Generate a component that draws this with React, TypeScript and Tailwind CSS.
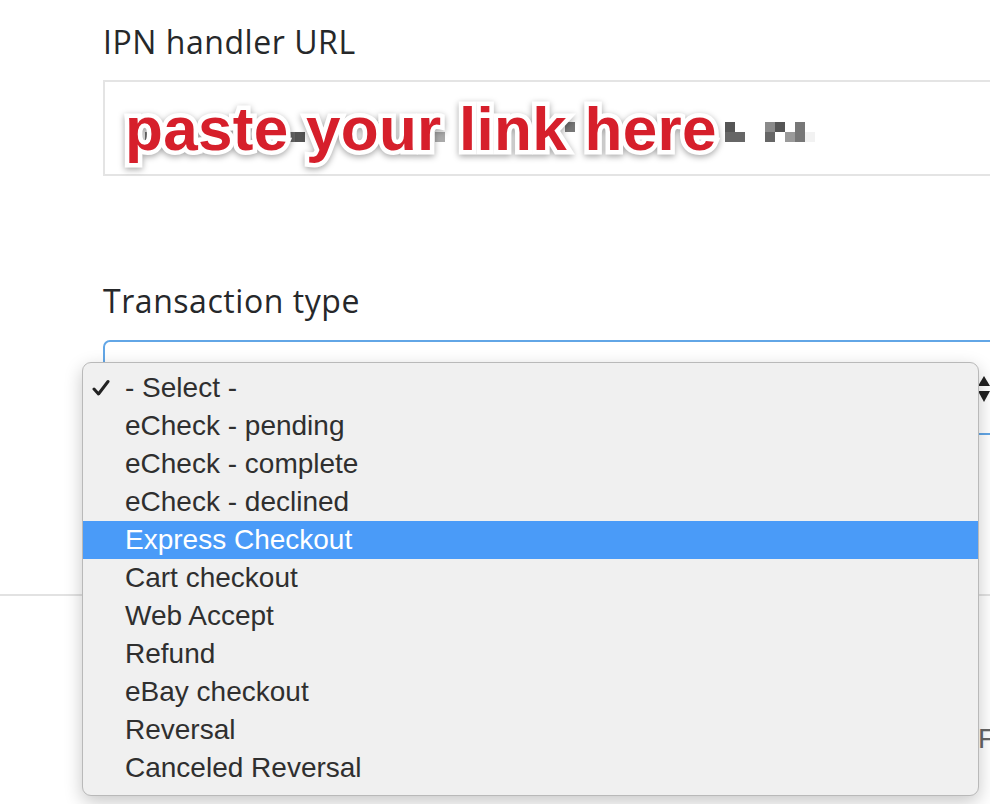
import React from 'react';

const options = [
  '- Select -',
  'eCheck - pending',
  'eCheck - complete',
  'eCheck - declined',
  'Express Checkout',
  'Cart checkout',
  'Web Accept',
  'Refund',
  'eBay checkout',
  'Reversal',
  'Canceled Reversal',
];

// pixelated leftovers of the blurred URL
const blocks = [
  { x: 0, y: 0, c: '#5a5a5a' }, { x: 20, y: 10, c: '#777' }, { x: 40, y: 0, c: '#999' },
  { x: 160, y: 10, c: '#666' }, { x: 170, y: 10, c: '#555' }, { x: 250, y: 0, c: '#888' },
  { x: 310, y: 10, c: '#aaa' }, { x: 440, y: 0, c: '#777' }, { x: 460, y: 10, c: '#999' },
  { x: 600, y: 0, c: '#555' }, { x: 600, y: 10, c: '#666' }, { x: 610, y: 10, c: '#666' },
  { x: 640, y: 10, c: '#666' }, { x: 640, y: 0, c: '#8a8a8a' }, { x: 650, y: 0, c: '#555' },
  { x: 660, y: 10, c: '#9a9a9a' }, { x: 670, y: 0, c: '#777' }, { x: 670, y: 10, c: '#777' },
  { x: 680, y: 10, c: '#f2f2f2' },
];

export default function App() {
  return (
    <div className="relative w-[990px] h-[804px] overflow-hidden bg-white font-['Open_Sans',sans-serif] text-[#26282a]">
      {/* Form */}
      <div className="pl-[103px] pt-[22px]">
        <div className="text-[32px] leading-[40px] tracking-[0.55px]">IPN handler URL</div>
        <div className="relative mt-[18px] h-[96px] w-[960px] border-2 border-[#e4e4e4] bg-white">
          <div className="absolute left-[20px] top-[40px]">
            {blocks.map((b, i) => (
              <div
                key={i}
                className="absolute w-[10px] h-[10px]"
                style={{ left: b.x, top: b.y, background: b.c }}
              />
            ))}
          </div>
          <div className="absolute left-[20px] top-[12px] font-['Liberation_Sans',sans-serif] font-bold text-[62px] leading-[70px] tracking-[0.3px] text-[#d61f2b] [paint-order:stroke_fill] [-webkit-text-stroke:9px_white] [filter:drop-shadow(0_2px_3px_rgba(0,0,0,0.35))]">
            paste your link here
          </div>
        </div>

        <div className="mt-[105px] text-[32px] leading-[40px] tracking-[0.55px]">Transaction type</div>
        <div className="relative mt-[19px] h-[95px] w-[960px] rounded-tl-[7px] border-2 border-[#62a6e6] bg-white">
          <svg className="absolute left-[872px] top-[33px]" width="14" height="30" viewBox="0 0 14 30">
            <path d="M7 1 L13 11 L1 11 Z" fill="#222" />
            <path d="M1 16 L13 16 L7 27 Z" fill="#222" />
          </svg>
        </div>
      </div>

      <div className="mt-[159px] h-[2px] w-full bg-[#e2e2e2]" />
      <div className="flex justify-end pt-[128px]">
        <span className="w-[12px] overflow-hidden text-[28px] leading-[30px] text-[#666] font-['Liberation_Sans',sans-serif]">F</span>
      </div>

      {/* Open dropdown menu */}
      <div className="absolute left-[82px] top-[362px] w-[897px] rounded-[9px] border border-[#b9b9b9] bg-[#f0f0f0] pt-[6px] pb-[8px] shadow-[0_6px_18px_rgba(0,0,0,0.22)] font-['Liberation_Sans',sans-serif] text-[28px] text-[#2f2f2f]">
        {options.map((o, i) => (
          <div
            key={o}
            className={
              i === 4
                ? 'flex h-[38px] items-center bg-[#4a9bf8] text-white'
                : 'flex h-[38px] items-center'
            }
          >
            <div className="flex w-[42px] justify-start pl-[9px]">
              {i === 0 && (
                <svg width="18" height="18" viewBox="0 0 18 18">
                  <path d="M2 10 L6.5 15 L16 2.5" fill="none" stroke="#222" strokeWidth="3" strokeLinecap="round" strokeLinejoin="round" />
                </svg>
              )}
            </div>
            <span className="leading-[38px]">{o}</span>
          </div>
        ))}
      </div>
    </div>
  );
}
